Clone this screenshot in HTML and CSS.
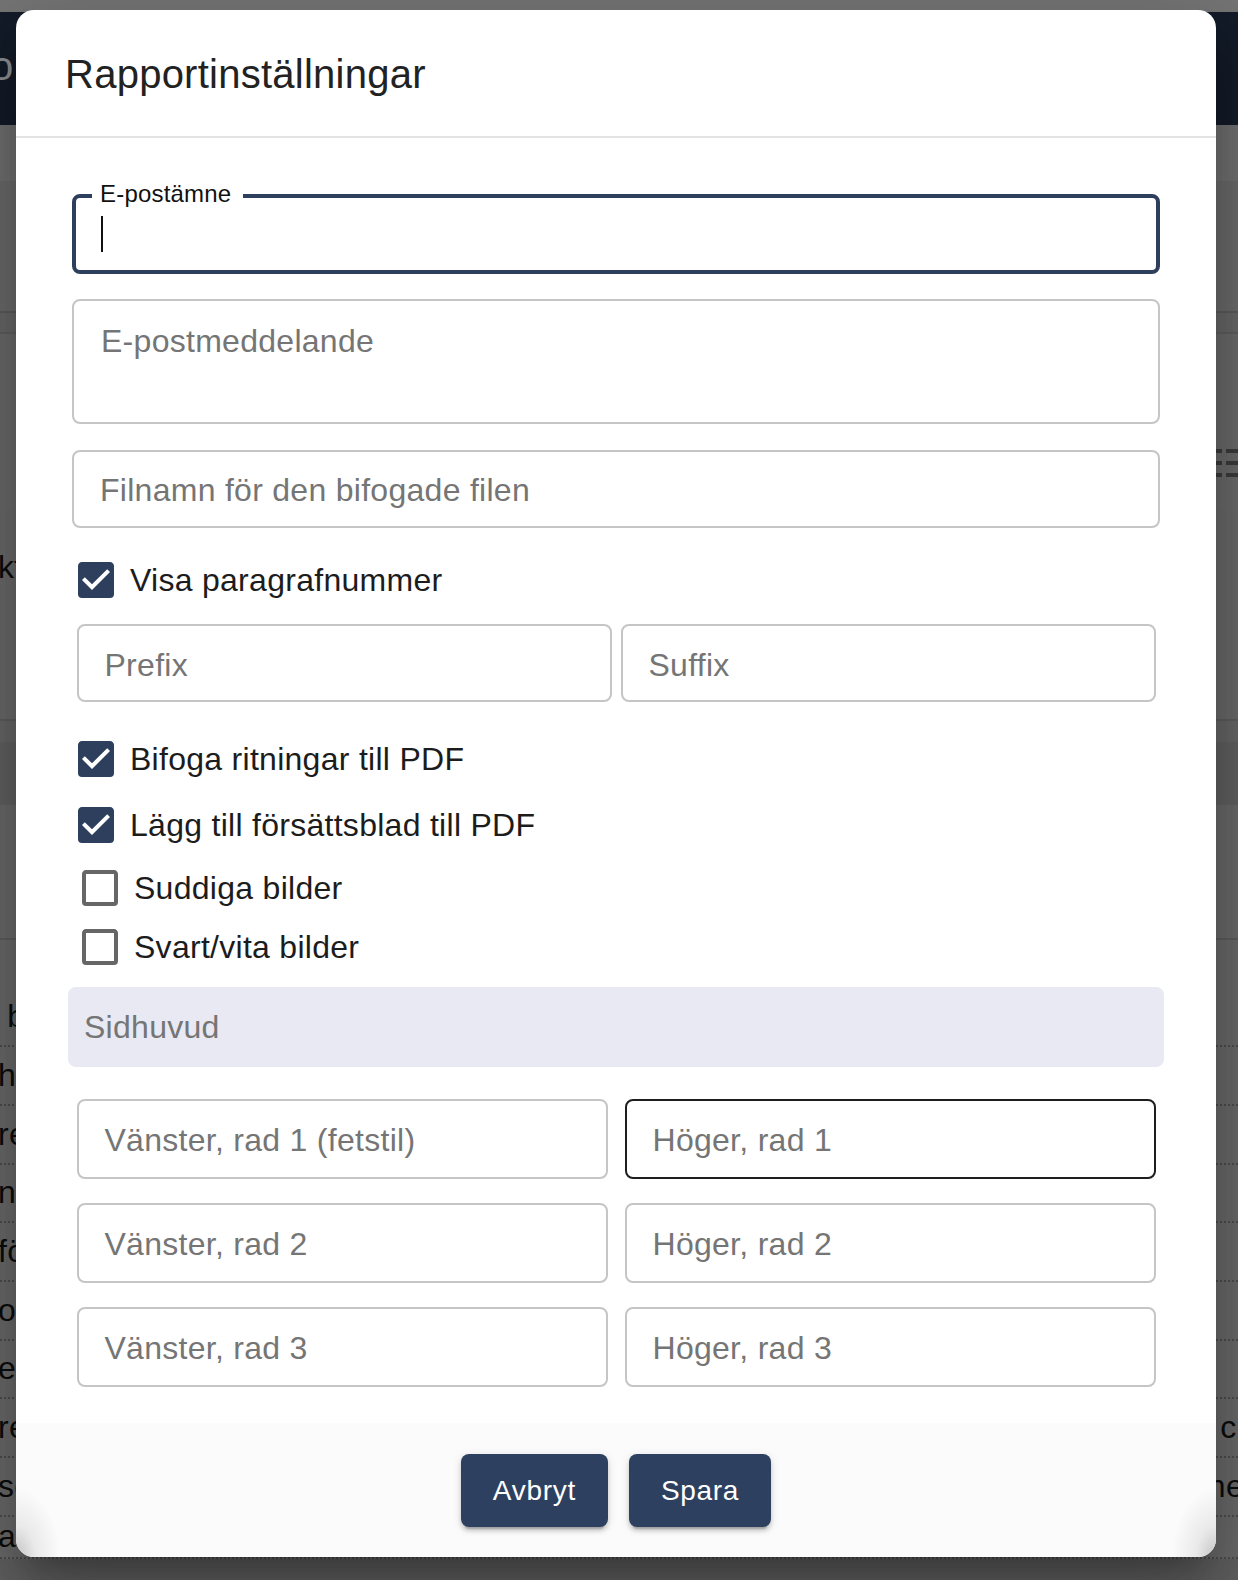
FILE: index.html
```html
<!DOCTYPE html>
<html lang="sv">
<head>
<meta charset="utf-8">
<title>Rapportinställningar</title>
<link rel="stylesheet" href="styles.css">
</head>
<body>
<div class="page">
  <div class="strip-top"></div>
  <div class="appbar"><span class="appbar-title">o</span></div>
  <div class="subbar"></div>
  <div class="section s1"></div>
  <div class="section s2"></div>
  <div class="section s3">
    <div class="list-icon"><span></span><span></span><span></span></div>
  </div>
  <div class="section s4"><span class="bg-text kt">kt</span></div>
  <div class="section s5a"></div>
  <div class="section s5"></div>
  <div class="section s6"></div>
  <div class="rows-head"></div>
  <div class="rows">
    <div class="row"><span class="l">&nbsp;b</span></div>
    <div class="row"><span class="l">hi</span></div>
    <div class="row"><span class="l">re</span></div>
    <div class="row"><span class="l">nt</span></div>
    <div class="row"><span class="l">fö</span></div>
    <div class="row"><span class="l">or</span></div>
    <div class="row"><span class="l">e</span></div>
    <div class="row"><span class="l">re</span><span class="r">cl</span></div>
    <div class="row"><span class="l">sc</span><span class="r">ne</span></div>
    <div class="row last"><span class="l">ar</span></div>
  </div>
  <div class="bottom-strip"></div>
</div>

<div class="dialog" role="dialog" aria-label="Rapportinställningar">
  <div class="dialog-header">Rapportinställningar</div>
  <div class="dialog-body">
    <div class="field focused">
      <span class="float-label">E-postämne</span>
      <span class="caret"></span>
    </div>
    <div class="field area"><span class="ph">E-postmeddelande</span></div>
    <div class="field single f3"><span class="ph">Filnamn för den bifogade filen</span></div>

    <div class="check c-visa">
      <svg class="cb" viewBox="0 0 24 24"><path d="M10,17L5,12L6.41,10.58L10,14.17L17.59,6.58L19,8M19,3H5C3.89,3 3,3.89 3,5V19A2,2 0 0,0 5,21H19A2,2 0 0,0 21,19V5C21,3.89 20.1,3 19,3Z"/></svg>
      <span class="check-label">Visa paragrafnummer</span>
    </div>

    <div class="pair">
      <div class="field single"><span class="ph">Prefix</span></div>
      <div class="field single"><span class="ph">Suffix</span></div>
    </div>

    <div class="check c-bifoga">
      <svg class="cb" viewBox="0 0 24 24"><path d="M10,17L5,12L6.41,10.58L10,14.17L17.59,6.58L19,8M19,3H5C3.89,3 3,3.89 3,5V19A2,2 0 0,0 5,21H19A2,2 0 0,0 21,19V5C21,3.89 20.1,3 19,3Z"/></svg>
      <span class="check-label">Bifoga ritningar till PDF</span>
    </div>
    <div class="check c-lagg">
      <svg class="cb" viewBox="0 0 24 24"><path d="M10,17L5,12L6.41,10.58L10,14.17L17.59,6.58L19,8M19,3H5C3.89,3 3,3.89 3,5V19A2,2 0 0,0 5,21H19A2,2 0 0,0 21,19V5C21,3.89 20.1,3 19,3Z"/></svg>
      <span class="check-label">Lägg till försättsblad till PDF</span>
    </div>
    <div class="check off c-sudd">
      <svg class="cb" viewBox="0 0 24 24"><path d="M19,3H5C3.89,3 3,3.89 3,5V19A2,2 0 0,0 5,21H19A2,2 0 0,0 21,19V5C21,3.89 20.1,3 19,3M19,5V19H5V5H19Z"/></svg>
      <span class="check-label">Suddiga bilder</span>
    </div>
    <div class="check off c-svart">
      <svg class="cb" viewBox="0 0 24 24"><path d="M19,3H5C3.89,3 3,3.89 3,5V19A2,2 0 0,0 5,21H19A2,2 0 0,0 21,19V5C21,3.89 20.1,3 19,3M19,5V19H5V5H19Z"/></svg>
      <span class="check-label">Svart/vita bilder</span>
    </div>

    <div class="section-bar">Sidhuvud</div>

    <div class="grid">
      <div class="field single"><span class="ph">Vänster, rad 1 (fetstil)</span></div>
      <div class="field single hover"><span class="ph">Höger, rad 1</span></div>
      <div class="field single"><span class="ph">Vänster, rad 2</span></div>
      <div class="field single"><span class="ph">Höger, rad 2</span></div>
      <div class="field single"><span class="ph">Vänster, rad 3</span></div>
      <div class="field single"><span class="ph">Höger, rad 3</span></div>
    </div>
  </div>
  <div class="dialog-footer">
    <button class="btn" type="button">Avbryt</button>
    <button class="btn" type="button">Spara</button>
  </div>
</div>
</body>
</html>
```

FILE: styles.css
```css
* { box-sizing: border-box; }

html, body {
  margin: 0;
  padding: 0;
}

body {
  width: 1238px;
  height: 1580px;
  overflow: hidden;
  font-family: "Liberation Sans", Arial, sans-serif;
  position: relative;
  background: #616161;
}

/* ---------- dimmed page behind the dialog ---------- */
.page {
  width: 1238px;
  height: 1580px;
  background: #6c6c6c;
  overflow: hidden;
}

.strip-top { height: 12px; background: #767677; }

.appbar {
  height: 113px;
  background: #141c29;
  display: flex;
  align-items: center;
}

.appbar-title {
  font-size: 40px;
  color: #8c8f94;
  margin-left: -9px;
  margin-top: -4px;
}

.subbar {
  height: 56px;
  background: #717171;
}

.section { position: relative; }
.s1 { height: 132px; background: #6c6c6c; border-bottom: 2px solid #5c5c5c; }
.s2 { height: 21px; background: #696969; border-bottom: 2px solid #606060; }
.s3 { height: 176px; background: #6c6c6c; }
.s4 { height: 211px; background: #6b6b6b; border-bottom: 2px solid #5e5e5e; }
.s5a { height: 21px; background: #686868; }
.s5 { height: 63px; background: #626262; }
.s6 { height: 135px; background: #6b6b6b; border-bottom: 2px solid #5e5e5e; }
.rows-head { height: 48.5px; background: #6b6b6b; }

.list-icon {
  position: absolute;
  right: 0;
  top: 115px;
  width: 22px;
  display: flex;
  flex-direction: column;
  gap: 8px;
}
.list-icon span {
  display: block;
  height: 4px;
  background: #3c3c3e;
  border-left: 6px solid #3c3c3e;
  box-shadow: inset 4px 0 0 #6c6c6c;
}

.bg-text {
  font-size: 32px;
  color: #0c0c0c;
}
.kt {
  position: absolute;
  left: -2px;
  top: 39px;
}

.rows { background: #6b6b6b; }
.row {
  height: 58.7px;
  display: flex;
  align-items: center;
  justify-content: space-between;
  border-bottom: 2px dotted #4d4d4d;
  font-size: 32px;
  color: #0c0c0c;
  letter-spacing: 0.3px;
}
.row.last { height: 42px; }
.row .l { margin-left: -2px; }
.row .r { margin-right: -6px; }

.bottom-strip { height: 30px; background: #616161; }

/* ---------- dialog ---------- */
.dialog {
  position: absolute;
  top: 10px;
  left: 16px;
  width: 1200px;
  background: #fff;
  border-radius: 18px;
  overflow: hidden;
  box-shadow:
    0 22px 30px -14px rgba(0, 0, 0, 0.25),
    0 48px 76px 6px rgba(0, 0, 0, 0.16),
    0 18px 92px 16px rgba(0, 0, 0, 0.14);
  color: #1f1f1f;
}

.dialog-header {
  padding: 32px 48px 30px 49px;
  font-size: 40px;
  line-height: 64px;
  letter-spacing: 0.25px;
  color: #222;
  border-bottom: 2px solid #e3e3e3;
}

.dialog-body {
  padding: 56px 56px 36px;
}

.field {
  position: relative;
  border: 2px solid #c5c5c5;
  border-radius: 8px;
  display: flex;
  align-items: center;
  padding-left: 26px;
  font-size: 32px;
  background: #fff;
}

.field.single { height: 78px; padding-top: 3px; }
.field.f3 { padding-top: 1px; }

.field.focused {
  height: 80px;
  border: 4px solid #2d3f5d;
  padding-left: 25px;
}

.float-label {
  position: absolute;
  top: -16px;
  left: 16px;
  padding: 0 12px 0 8px;
  background: #fff;
  font-size: 24px;
  line-height: 24px;
  letter-spacing: 0.2px;
  color: #111;
}

.caret {
  width: 2px;
  height: 36px;
  background: #111;
}

.field.area {
  margin-top: 25px;
  height: 125px;
  align-items: flex-start;
  padding-top: 20px;
  padding-left: 27px;
}

.f3 { margin-top: 26px; }

.ph {
  color: #757575;
  font-size: 32px;
  line-height: 40px;
  letter-spacing: 0.28px;
  white-space: nowrap;
}

.check {
  display: flex;
  align-items: center;
  height: 48px;
}
.check .cb {
  width: 48px;
  height: 48px;
  fill: #2d3f5d;
  flex: none;
}
.check.off { padding-left: 4px; }
.check.off .cb { fill: #666; }

.check-label {
  margin-left: 10px;
  font-size: 32px;
  line-height: 48px;
  letter-spacing: 0.28px;
  color: #1c1c1c;
  white-space: nowrap;
}

.c-visa { margin-top: 28px; }
.c-bifoga { margin-top: 33px; }
.c-lagg { margin-top: 18px; }
.c-sudd { margin-top: 15px; }
.c-svart { margin-top: 11px; }

.pair {
  margin-top: 20px;
  padding: 0 4.5px;
  display: grid;
  grid-template-columns: 1fr 1fr;
  column-gap: 9px;
}

.section-bar {
  margin: 16px -4px 0;
  height: 80px;
  border-radius: 8px;
  background: #e8e9f2;
  color: #757575;
  font-size: 32px;
  letter-spacing: 0.28px;
  display: flex;
  align-items: center;
  padding: 0 0 0 16px;
}

.grid {
  margin-top: 32px;
  padding: 0 4.5px;
  display: grid;
  grid-template-columns: 1fr 1fr;
  column-gap: 17px;
  row-gap: 24px;
}
.grid .field.single { height: 80px; padding-top: 2px; }
.field.hover { border-color: #1e1e1e; }

.dialog-footer {
  position: relative;
  background: #fbfbfb;
  padding: 31px 0 30px;
  display: flex;
  justify-content: center;
  gap: 21px;
}
.dialog-footer::before,
.dialog-footer::after {
  content: "";
  position: absolute;
  bottom: 0;
  width: 44px;
  height: 70px;
  pointer-events: none;
}
.dialog-footer::before {
  left: 0;
  background: radial-gradient(ellipse 44px 70px at 0 100%, rgba(0, 0, 0, 0.22) 0%, rgba(0, 0, 0, 0.07) 45%, rgba(0, 0, 0, 0) 100%);
}
.dialog-footer::after {
  right: 0;
  background: radial-gradient(ellipse 44px 70px at 100% 100%, rgba(0, 0, 0, 0.22) 0%, rgba(0, 0, 0, 0.07) 45%, rgba(0, 0, 0, 0) 100%);
}

.btn {
  position: relative;
  z-index: 1;
  height: 73px;
  padding: 0 32px;
  border: 0;
  border-radius: 8px;
  background: #2e405f;
  color: #fff;
  font-family: "Liberation Sans", Arial, sans-serif;
  font-size: 28px;
  letter-spacing: 0.7px;
  box-shadow:
    0 6px 2px -4px rgba(0, 0, 0, 0.2),
    0 4px 4px 0 rgba(0, 0, 0, 0.14),
    0 2px 10px 0 rgba(0, 0, 0, 0.12);
}
```
